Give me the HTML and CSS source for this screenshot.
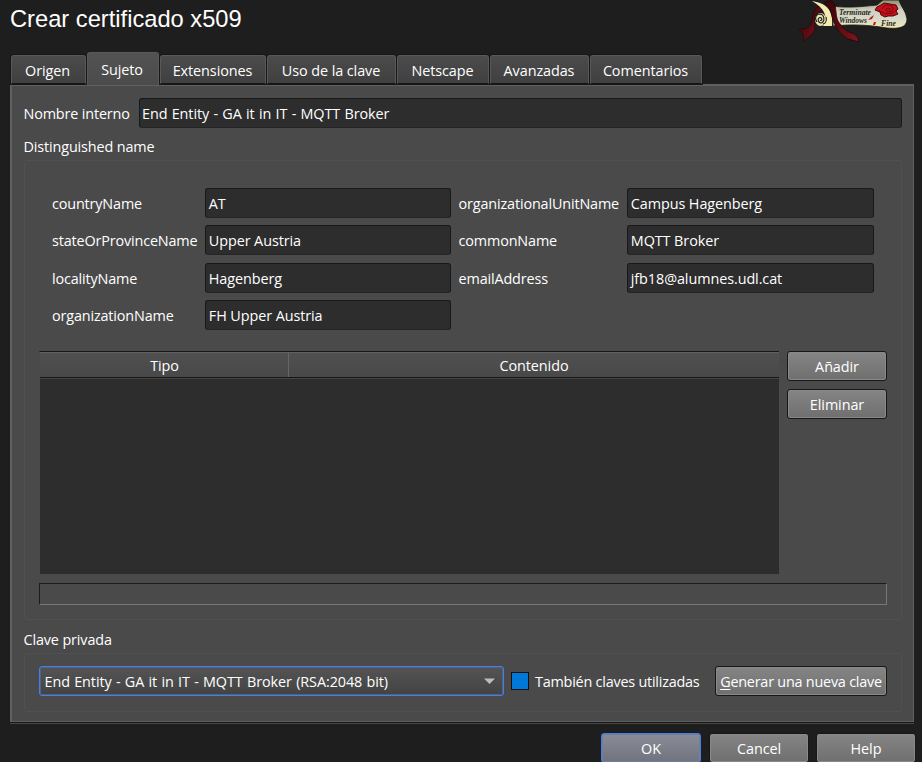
FILE: index.html
```html
<!DOCTYPE html>
<html lang="es">
<head>
<meta charset="utf-8">
<title>Crear certificado x509</title>
<link rel="stylesheet" href="styles.css">
</head>
<body>
<header class="header">
  <h1 class="title">Crear certificado x509</h1>
  <svg class="banner" width="112" height="44" viewBox="0 0 112 44">
    <defs>
      <linearGradient id="paper" x1="0" y1="0" x2="0" y2="1"><stop offset="0" stop-color="#8f8e6c"/><stop offset=".35" stop-color="#cfcfc0"/><stop offset=".75" stop-color="#dcdcca"/><stop offset="1" stop-color="#f3ebac"/></linearGradient>
      <linearGradient id="ribbon" x1="0" y1="0" x2="1" y2="1"><stop offset="0" stop-color="#3a0508"/><stop offset=".5" stop-color="#560b10"/><stop offset="1" stop-color="#7a1820"/></linearGradient>
    </defs>
    <path d="M25 5C17 7 16 14 15 21C14 27 9 30 2 29L6 34L7 41L14 35C20 31 17 24 18 17C19 13 22 11 25 11Z" fill="url(#ribbon)" stroke="#2a0507" stroke-width=".7"/>
    <path d="M36 6C48 8 62 7 80 5L86 0H102C104 7 109 11 110 19C110 28 101 29 90 28C72 25 56 24 36 26Z" fill="url(#paper)" stroke="#171710" stroke-width=".8"/>
    <path d="M15 1C27 3 37 8 35 26H26C32 17 27 8 15 1Z" fill="#f3ebb2"/>
    <ellipse cx="23.500" cy="19.500" rx="5.500" ry="6.500" fill="#e6e0b4"/>
    <path d="M20 22C17 18 19 14 23 14C28 15 28 22 24 23C21 23 20 18 23 17.500C26 18 25 21 23 20.500M26 24C29 23 30 20 29 17" fill="none" stroke="#1d1d17" stroke-width="1.100"/>
    <path d="M27 3C35 7 34 17 38 25C41 31 45 36 51 39L62 42C62 39 60 36 56 33C49 32 45 27 41 21C38 14 40 7 36 2C33 0 29 1 27 3Z" fill="url(#ribbon)" stroke="#250407" stroke-width=".8"/>
    <g class="script"><text x="42" y="15" textLength="32" lengthAdjust="spacingAndGlyphs">Terminate</text><text x="42" y="22.500" textLength="28" lengthAdjust="spacingAndGlyphs">Windows</text><text x="84" y="26" textLength="15" lengthAdjust="spacingAndGlyphs">Fine</text></g>
    <path d="M80 7L84 5L87 3L93 4L99 5L101 9L99 11L101 14L96 16L91 16L88 17L84 15L83 12L78 10Z" fill="#c9101a" stroke="#4d0509"/>
    <path d="M85 9C86 4 95 4 96 8C97 13 88 13 89 9C91 7 95 9 92 10.500M82 10C86 15 96 15 99 10" fill="none" stroke="#65070c" stroke-width=".9"/>
    <path d="M71 20L74 17L77 15L75 19ZM76 25L77 22L79 22L78 25Z" fill="#c01119"/>
  </svg>
</header>

<nav class="tabs">
  <div class="tab t1"><span>Origen</span></div>
  <div class="tab t2 active"><span>Sujeto</span></div>
  <div class="tab t3"><span>Extensiones</span></div>
  <div class="tab t4"><span>Uso de la clave</span></div>
  <div class="tab t5"><span>Netscape</span></div>
  <div class="tab t6"><span>Avanzadas</span></div>
  <div class="tab t7"><span>Comentarios</span></div>
</nav>

<main class="panel">
  <div class="name-row"><label>Nombre interno</label><div class="field long">End Entity - GA it in IT - MQTT Broker</div></div>
  <div class="caption">Distinguished name</div>
  <section class="group dn">
    <div class="form">
      <label>countryName</label><div class="field">AT</div>
      <label class="second">organizationalUnitName</label><div class="field">Campus Hagenberg</div>
      <label>stateOrProvinceName</label><div class="field">Upper Austria</div>
      <label class="second">commonName</label><div class="field">MQTT Broker</div>
      <label>localityName</label><div class="field">Hagenberg</div>
      <label class="second">emailAddress</label><div class="field">jfb18@alumnes.udl.cat</div>
      <label>organizationName</label><div class="field">FH Upper Austria</div>
    </div>
    <div class="table-row">
      <div class="table">
        <div class="thead"><div class="th tipo">Tipo</div><div class="th contenido">Contenido</div></div>
      </div>
      <div class="side"><div class="button">Añadir</div><div class="button">Eliminar</div></div>
    </div>
    <div class="info"></div>
  </section>
  <div class="caption key-caption">Clave privada</div>
  <section class="group key">
    <div class="combo long"><span>End Entity - GA it in IT - MQTT Broker (RSA:2048 bit)</span><svg width="11" height="7" viewBox="0 0 11 7"><path d="M0 .5H11L5.5 6Z" fill="#bdbdbd"/></svg></div>
    <div class="check"></div>
    <label class="check-label">También claves utilizadas</label>
    <div class="button generate"><span><u>G</u>enerar una nueva clave</span></div>
  </section>
</main>
<footer class="footer">
  <div class="button ok">OK</div><div class="button">Cancel</div><div class="button">Help</div>
</footer>
</body>
</html>
```
FILE: styles.css
```css
* { box-sizing: border-box; }
body {
  margin: 0;
  width: 922px;
  height: 762px;
  overflow: hidden;
  background: #1e1e1e;
  color: #fff;
  font-family: "Open Sans", "Noto Sans", sans-serif;
  font-size: 14.4px;
  line-height: 20px;
  letter-spacing: -0.08px;
  white-space: nowrap;
}
.header { display: flex; justify-content: space-between; height: 52px; padding: 0 13px 0 10px; }
.title { margin: 5px 0 0; font: 400 23.7px/28px "Liberation Sans", sans-serif; letter-spacing: 0; }
.script { letter-spacing: 0; }
.script text { font: italic bold 8px "Liberation Serif", serif; fill: #29291f; }

.tabs { display: flex; align-items: flex-end; gap: 1px; height: 32px; padding-left: 11px; }
.tab {
  display: flex; align-items: center; justify-content: center;
  height: 29px;
  border: 1px solid #595959; border-bottom: 1px solid #151515; border-radius: 3px 3px 0 0;
  background: linear-gradient(#4b4b4b, #404040);
  box-shadow: 0 0 0 1px #171717;
  padding-top: 2px;
}
.tab.active { height: 33px; margin-bottom: -1px; padding: 1px 2px 0 0; border-bottom: 0; background: linear-gradient(#525252, #4b4b4b); position: relative; box-shadow: none; }
.t1 { width: 75px; padding-right: 2px; }
.t2 { width: 72px; }
.t3 { width: 106px; padding-right: 1px; }
.t4 { width: 129px; padding-right: 1px; }
.t5 { width: 92px; padding-right: 1px; }
.t6 { width: 99px; padding-right: 1px; }
.t7 { width: 112px; padding-right: 1px; }

.panel {
  width: 904px; height: 638px; margin-left: 10px;
  padding: 12px 11px 0 11.5px;
  background: #4a4a4a;
  border: solid #606060; border-width: 2px 1px 1px 2px;
  box-shadow: 0 1px #151515, 0 2px #484848;
}
label { letter-spacing: -0.15px; }
.name-row { display: flex; align-items: center; height: 30px; }
.name-row label { width: 115px; padding-top: 1px; }
.name-row .field { flex: 1; padding-left: 2.5px; }
.field {
  height: 30px; padding: 5px 3px;
  background: #2d2d2d; border: 1px solid #191919; border-bottom-color: #252525; border-radius: 3px;
}
.long { word-spacing: 0.65px; }
.caption { height: 32px; padding-top: 9px; letter-spacing: -0.13px; }
.group { border: 1px solid #505050; border-radius: 3px; margin-left: 0.5px; width: 878px; }
.dn { height: 460px; padding: 27px 14px 0 14px; }
.form { display: grid; grid-template-columns: 153px 246px 176px 247px; grid-template-rows: repeat(4, 30px); row-gap: 7.4px; margin-left: 13px; width: 822px; }
.form label { padding-top: 6px; }
.form .second { padding-left: 7.6px; }
.form .field { padding-left: 2.8px; }
.table-row { display: flex; gap: 8px; margin-top: 21px; height: 223px; }
.table { width: 740px; background: #2d2d2d; border-top: 1px solid #171717; border-left: 1px solid #4a4a4a; }
.thead { display: flex; height: 26px; background: linear-gradient(#505050, #484848); border-top: 1px solid #606060; border-bottom: 1px solid #171717; box-shadow: 0 1px #454545; }
.th { text-align: center; padding-top: 3px; }
.tipo { width: 249px; padding-left: 1px; border-right: 1px solid #666; }
.contenido { flex: 1; }
.side { display: flex; flex-direction: column; gap: 8px; }
.button, .combo, .check, .check-label, .table, .side { flex-shrink: 0; }
.button {
  display: flex; align-items: center; justify-content: center;
  width: 100px; height: 30px;
  border: 1px solid #171717; border-radius: 3px;
  background: linear-gradient(#858585, #6f6f6f);
  box-shadow: inset 0 0 0 1px #898989;
  padding-top: 1px;
}
.info { height: 22px; width: 848px; margin-top: 9px; border: 1px solid #1b1b1b; border-right-color: #777; border-bottom-color: #777; }
.key-caption { height: 33px; padding-top: 10px; }
.key { display: flex; align-items: center; height: 59px; padding: 0 14px 3px 14px; }
.combo {
  display: flex; align-items: center; justify-content: space-between;
  width: 465px; height: 30px; padding: 1px 8px 0 4.5px;
  border: 1px solid #457fea; border-radius: 3px;
  background: linear-gradient(#545454, #434343); box-shadow: inset 0 0 0 1px #526078;
}
.check { width: 18px; height: 18px; margin: 0 6px 0 7px; background: #0078d7; border: 1px solid #111; }
.check-label { width: 180px; padding-top: 1px; letter-spacing: -0.22px; }
.key .generate { width: 172px; letter-spacing: -0.22px; }
u { text-underline-offset: 2px; text-decoration-thickness: 1px; }
.footer { display: flex; justify-content: flex-end; gap: 7px; margin-top: 11px; padding-right: 6px; }
.footer .ok { margin-right: 1px; border-color: #457fea; background: linear-gradient(#8a8d98, #70737e); box-shadow: inset 0 0 0 1px #707d9d; }
```
